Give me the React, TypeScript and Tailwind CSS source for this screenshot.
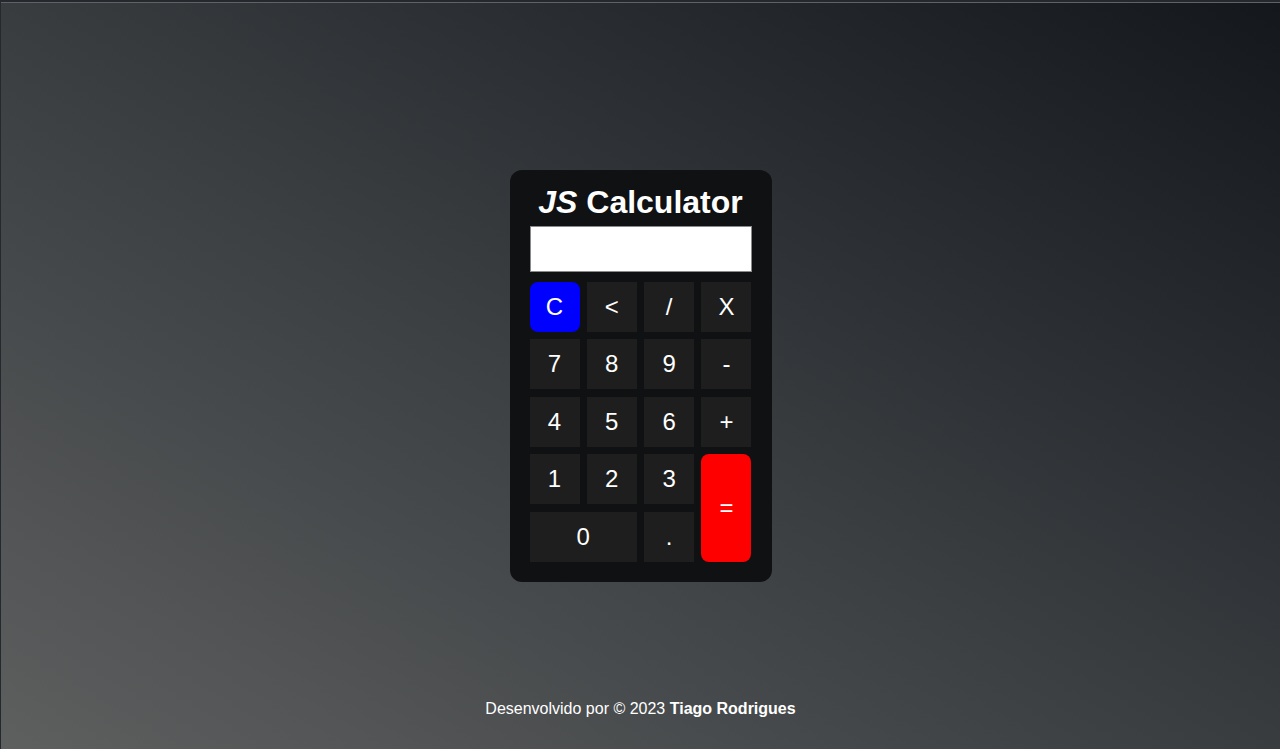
import React, { useState } from 'react';

const keys: { label: string; value: string; cls?: string }[] = [
  { label: 'C', value: 'C', cls: 'bg-[#0000ff] rounded-lg' },
  { label: '<', value: '<' },
  { label: '/', value: '/' },
  { label: 'X', value: '*' },
  { label: '7', value: '7' },
  { label: '8', value: '8' },
  { label: '9', value: '9' },
  { label: '-', value: '-' },
  { label: '4', value: '4' },
  { label: '5', value: '5' },
  { label: '6', value: '6' },
  { label: '+', value: '+' },
  { label: '1', value: '1' },
  { label: '2', value: '2' },
  { label: '3', value: '3' },
  { label: '=', value: '=', cls: 'bg-[#ff0000] rounded-lg row-span-2' },
  { label: '0', value: '0', cls: 'bg-[#1e1e1e] col-span-2' },
  { label: '.', value: '.' },
];

export default function App() {
  const [display, setDisplay] = useState('');

  const press = (v: string) => {
    if (v === 'C') return setDisplay('');
    if (v === '<') return setDisplay((d) => d.slice(0, -1));
    if (v === '=') {
      try {
        // eslint-disable-next-line no-new-func
        const r = Function(`return (${display})`)();
        setDisplay(String(r));
      } catch {
        setDisplay('Erro');
      }
      return;
    }
    setDisplay((d) => d + v);
  };

  return (
    <div
      className="h-[749px] border-t-2 border-l border-[#25292d] font-['Liberation_Sans',Arial,sans-serif] text-white"
      style={{ background: 'linear-gradient(to top right, #5e5f5f 0%, #3c4043 45%, #14181d 100%)' }}
    >
      <div className="h-full border-t border-[#5f6366] grid grid-rows-[1fr_auto_1fr]">
        <div />
        <div className="mx-auto -mt-px w-[262px] bg-[#101112] rounded-xl px-5 pt-[14px] pb-5">
          <h1 className="text-[32px] leading-[37px] font-bold text-center">
            <i>JS</i> Calculator
          </h1>
          <input
            readOnly
            value={display}
            className="mt-[5px] w-[222px] h-[46px] bg-white border border-[#8a8a8a] text-black text-right text-2xl px-2 outline-none"
          />
          <div className="mt-[10px] grid grid-cols-[repeat(4,50px)] auto-rows-[50px] gap-x-[7.3px] gap-y-[7.5px]">
            {keys.map((k) => (
              <button
                key={k.label}
                onClick={() => press(k.value)}
                className={`text-2xl text-white flex items-center justify-center ${k.cls ?? 'bg-[#1e1e1e]'}`}
              >
                {k.label}
              </button>
            ))}
          </div>
        </div>
        <footer className="self-end pb-[28px] text-center text-base">
          Desenvolvido por © 2023 <b>Tiago Rodrigues</b>
        </footer>
      </div>
    </div>
  );
}
